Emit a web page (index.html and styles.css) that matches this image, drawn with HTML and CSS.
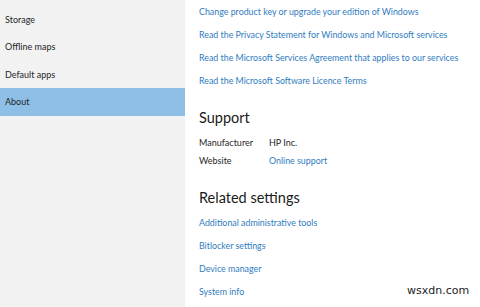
FILE: index.html
```html
<!DOCTYPE html>
<html>
  <head>
    <meta charset='utf-8'/>
    <link rel="stylesheet" href="styles.css">
  </head>
  <body>
    <div class='columns'>
      <div class='nav'>
        <div class='nav-item'>Storage</div>
        <div class='nav-item'>Offline maps</div>
        <div class='nav-item'>Default apps</div>
        <div class='nav-item selected'>About</div>
      </div>

      <div class='content'>
        <div class='links'>
          <a>Change product key or upgrade your edition of Windows</a>
          <a>Read the Privacy Statement for Windows and Microsoft services</a>
          <a>Read the Microsoft Services Agreement that applies to our services</a>
          <a>Read the Microsoft Software Licence Terms</a>
        </div>

        <h2 class='support'>Support</h2>
        <div class='info'>
          <span class='label'>Manufacturer</span><span>HP Inc.</span>
          <span class='label'>Website</span><a>Online support</a>
        </div>

        <h2 class='related'>Related settings</h2>
        <div class='links'>
          <a>Additional administrative tools</a>
          <a>Bitlocker settings</a>
          <a>Device manager</a>
          <a>System info</a>
        </div>
      </div>
    </div>
    <div class='watermark'>wsxdn.com</div>
  </body>
</html>
```

FILE: styles.css
```css
* {
  font-family: 'Lato', 'Noto Sans', sans-serif;
}

body {
  margin: 0;
  background: #fff;
  width: 480px;
  height: 307px;
  overflow: hidden;
  position: relative;
}

.columns {
  display: flex;
  height: 307px;
}

.nav {
  width: 185px;
  flex-shrink: 0;
  background: #f2f2f2;
  padding-top: 5.5px;
}

.nav-item {
  height: 27.5px;
  line-height: 27.5px;
  padding-left: 5px;
  font-size: 9px;
  color: #262626;
}

.nav-item.selected {
  background: #8dbfe7;
}

.content {
  padding-left: 14px;
  white-space: nowrap;
}

.links {
  display: flex;
  flex-direction: column;
}

a {
  color: #2f7cc0;
  font-size: 8.85px;
  line-height: 23px;
}

h2 {
  font-weight: normal;
  font-size: 14.5px;
  line-height: 20px;
  color: #1a1a1a;
  margin: 0;
}

h2.support {
  margin: 15.5px 0 6px;
}

h2.related {
  margin: 18px 0 3.5px;
}

.info {
  display: grid;
  grid-template-columns: 70px auto;
  font-size: 9px;
  color: #262626;
  line-height: 18px;
}

.info a {
  line-height: 18px;
}

.watermark {
  position: absolute;
  left: 407px;
  top: 284px;
  font-size: 11px;
  color: #222;
  font-family: 'DejaVu Sans', sans-serif;
}
```
